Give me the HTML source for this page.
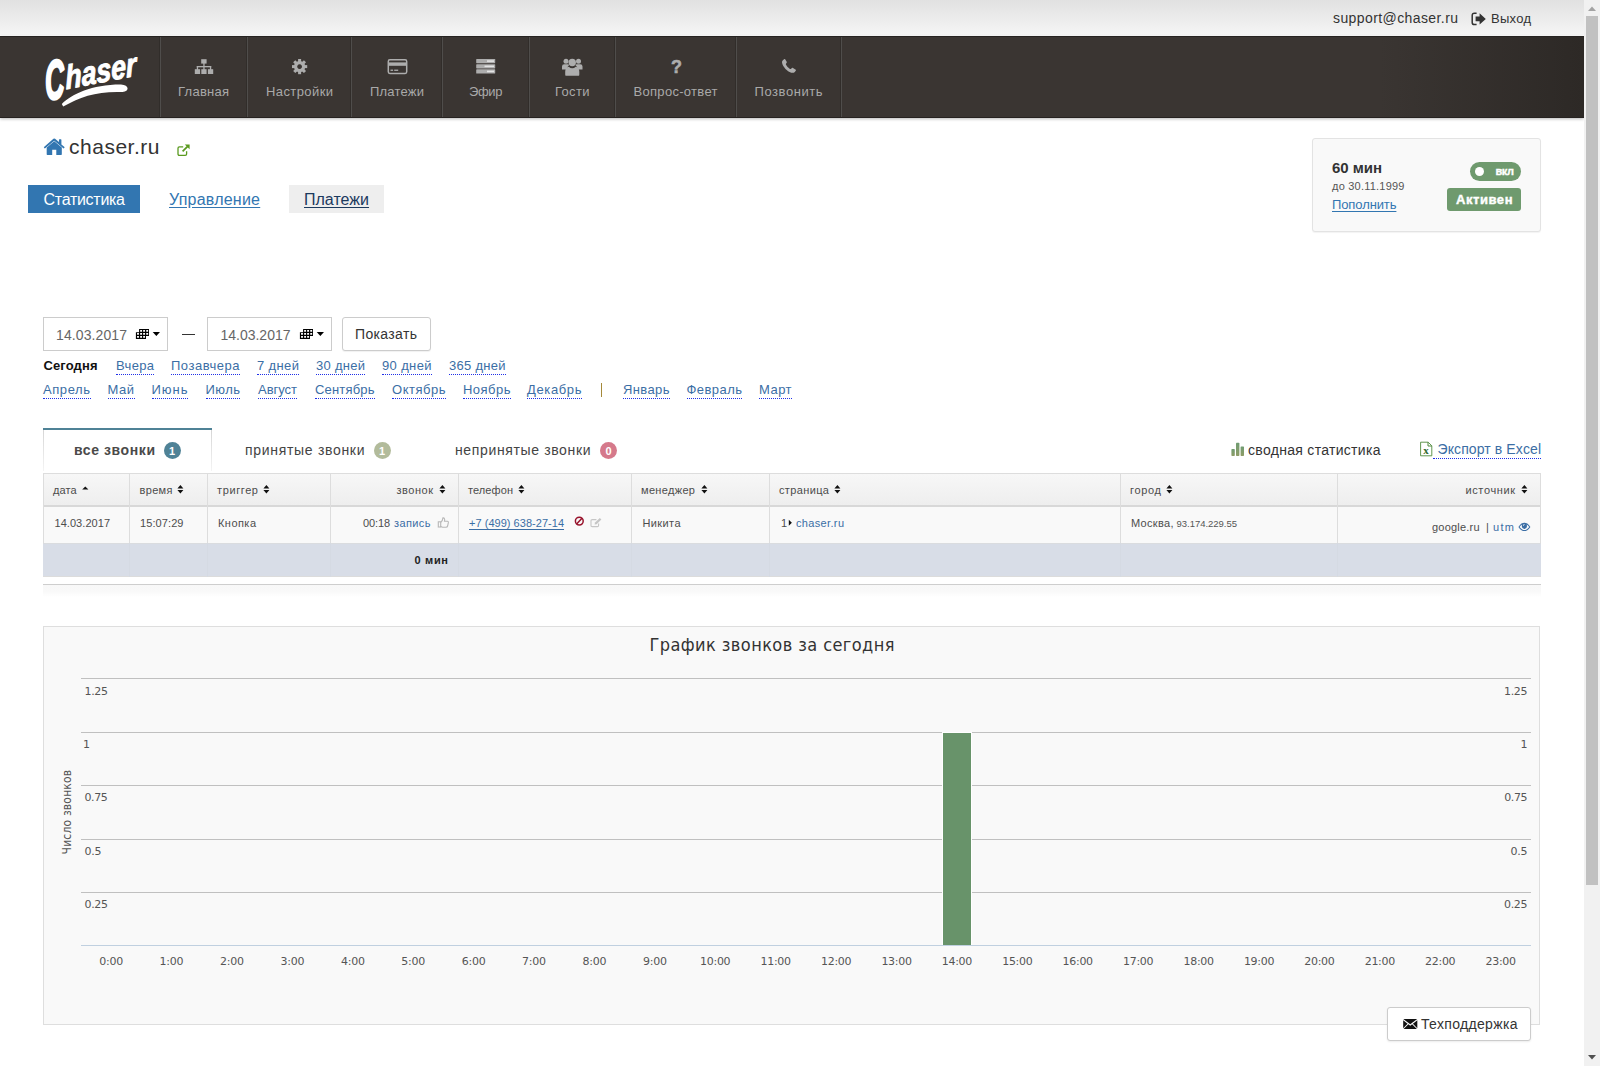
<!DOCTYPE html>
<html lang="ru"><head><meta charset="utf-8"><title>Chaser</title>
<style>
html,body{margin:0;padding:0;}
body{width:1600px;height:1066px;position:relative;overflow:hidden;background:#fff;font-family:"Liberation Sans",sans-serif;}
.t{position:absolute;white-space:nowrap;margin:0;padding:0;}
.b{position:absolute;box-sizing:border-box;}
svg{position:absolute;overflow:visible;}
.dot{border-bottom:1px dotted #2a4fd8;}
</style></head><body>

<!-- top bar -->
<div class="b" style="left:0;top:0;width:1584px;height:35px;background:linear-gradient(#e1e1e1,#f5f5f5);"></div>
<!-- nav -->
<div class="b" style="left:0;top:35px;width:1584px;height:1px;background:#fff;"></div>
<div class="b" style="left:0;top:36px;width:1584px;height:82px;background:linear-gradient(90deg,#3a3532 0,#3a3532 1380px,#2d2926 1584px);box-shadow:0 1px 3px rgba(0,0,0,.28);border-top:1px solid #262321;border-bottom:1px solid #262220;"></div>
<div class="b" style="left:159px;top:37px;width:2px;height:80px;background:linear-gradient(90deg,#312d2a 50%,#4f4d4b 50%);"></div>
<div class="b" style="left:246px;top:37px;width:2px;height:80px;background:linear-gradient(90deg,#312d2a 50%,#4f4d4b 50%);"></div>
<div class="b" style="left:350px;top:37px;width:2px;height:80px;background:linear-gradient(90deg,#312d2a 50%,#4f4d4b 50%);"></div>
<div class="b" style="left:441px;top:37px;width:2px;height:80px;background:linear-gradient(90deg,#312d2a 50%,#4f4d4b 50%);"></div>
<div class="b" style="left:528px;top:37px;width:2px;height:80px;background:linear-gradient(90deg,#312d2a 50%,#4f4d4b 50%);"></div>
<div class="b" style="left:614px;top:37px;width:2px;height:80px;background:linear-gradient(90deg,#312d2a 50%,#4f4d4b 50%);"></div>
<div class="b" style="left:735px;top:37px;width:2px;height:80px;background:linear-gradient(90deg,#312d2a 50%,#4f4d4b 50%);"></div>
<div class="b" style="left:840px;top:37px;width:2px;height:80px;background:linear-gradient(90deg,#312d2a 50%,#4f4d4b 50%);"></div>

<!-- scrollbar -->
<div class="b" style="left:1584px;top:0;width:16px;height:1066px;background:#f1f1f1;"></div>
<div class="b" style="left:1586px;top:16px;width:12px;height:869px;background:#c1c1c1;"></div>
<svg style="left:1584px;top:0" width="16" height="16"><path d="M4 11 L8 6.5 L12 11Z" fill="#a3a3a3"/></svg>
<svg style="left:1584px;top:1050px" width="16" height="16"><path d="M4 5 L8 9.5 L12 5Z" fill="#505050"/></svg>

<!-- site tabs -->
<div class="b" style="left:28px;top:185px;width:112px;height:28px;background:#3276b1;"></div>
<div class="b" style="left:289px;top:185px;width:95px;height:28px;background:#eeeeee;"></div>

<!-- right panel -->
<div class="b" style="left:1312px;top:138px;width:229px;height:94px;background:#f9f9f9;border:1px solid #e3e3e3;border-radius:3px;box-shadow:0 1px 1px rgba(0,0,0,.05);"></div>
<div class="b" style="left:1470px;top:162px;width:51px;height:19px;background:#6f9a6e;border-radius:10px;"></div>
<div class="b" style="left:1475px;top:167px;width:9px;height:9px;background:#fff;border-radius:50%;"></div>
<div class="b" style="left:1447px;top:188px;width:74px;height:23px;background:#6f9a6e;border-radius:3px;"></div>

<!-- date inputs -->
<div class="b" style="left:43px;top:317px;width:125px;height:34px;background:#fff;border:1px solid #ccc;"></div>
<div class="b" style="left:207px;top:317px;width:125px;height:34px;background:#fff;border:1px solid #ccc;"></div>
<div class="b" style="left:342px;top:317px;width:89px;height:34px;background:#fff;border:1px solid #ccc;border-radius:3px;box-shadow:0 1px 1px rgba(0,0,0,.06);"></div>
<div class="b" style="left:182px;top:334px;width:13px;height:1px;background:#333;"></div>
<div class="b" style="left:601px;top:383px;width:1px;height:14px;background:#a5893a;"></div>

<!-- call tabs -->
<div class="b" style="left:43px;top:428px;width:169px;height:2px;background:#4f8296;"></div>
<div class="b" style="left:43px;top:430px;width:1px;height:41px;background:linear-gradient(#d6d6d6,#f4f4f4);"></div>
<div class="b" style="left:211px;top:430px;width:1px;height:41px;background:linear-gradient(#d6d6d6,#f4f4f4);"></div>
<div class="b" style="left:164px;top:442px;width:17px;height:17px;border-radius:50%;background:#4f8296;"></div>
<div class="b" style="left:374px;top:442px;width:17px;height:17px;border-radius:50%;background:#b2bb9b;"></div>
<div class="b" style="left:600px;top:442px;width:17px;height:17px;border-radius:50%;background:#d5798b;"></div>

<!-- table -->
<div class="b" style="left:43px;top:473px;width:1498px;height:34px;background:linear-gradient(#f7f7f7,#eeeeee);border-top:1px solid #ddd;border-bottom:2px solid #d8d8d8;"></div>
<div class="b" style="left:43px;top:507px;width:1498px;height:36px;background:#f9f9f9;"></div>
<div class="b" style="left:43px;top:543px;width:1498px;height:34px;background:#d8dde7;border-top:1px solid #dadcdf;border-bottom:1px solid #dcdcdc;"></div>
<div class="b" style="left:43px;top:473px;width:1px;height:70px;background:#ddd;"></div>
<div class="b" style="left:129px;top:473px;width:1px;height:70px;background:#ddd;"></div>
<div class="b" style="left:207px;top:473px;width:1px;height:70px;background:#ddd;"></div>
<div class="b" style="left:330px;top:473px;width:1px;height:70px;background:#ddd;"></div>
<div class="b" style="left:458px;top:473px;width:1px;height:70px;background:#ddd;"></div>
<div class="b" style="left:631px;top:473px;width:1px;height:70px;background:#ddd;"></div>
<div class="b" style="left:769px;top:473px;width:1px;height:70px;background:#ddd;"></div>
<div class="b" style="left:1120px;top:473px;width:1px;height:70px;background:#ddd;"></div>
<div class="b" style="left:1337px;top:473px;width:1px;height:70px;background:#ddd;"></div>
<div class="b" style="left:1540px;top:473px;width:1px;height:70px;background:#ddd;"></div>
<div class="b" style="left:129px;top:543px;width:1px;height:34px;background:#d5dae3;"></div>
<div class="b" style="left:207px;top:543px;width:1px;height:34px;background:#d5dae3;"></div>
<div class="b" style="left:330px;top:543px;width:1px;height:34px;background:#d5dae3;"></div>
<div class="b" style="left:458px;top:543px;width:1px;height:34px;background:#d5dae3;"></div>
<div class="b" style="left:631px;top:543px;width:1px;height:34px;background:#d5dae3;"></div>
<div class="b" style="left:769px;top:543px;width:1px;height:34px;background:#d5dae3;"></div>
<div class="b" style="left:1120px;top:543px;width:1px;height:34px;background:#d5dae3;"></div>
<div class="b" style="left:1337px;top:543px;width:1px;height:34px;background:#d5dae3;"></div>
<div class="b" style="left:43px;top:584px;width:1498px;height:13px;border-top:1px solid #cecece;background:linear-gradient(#f8f8f8 0,#f9f9f9 55%,#fff 100%);"></div>

<div class="b" style="left:1433px;top:458px;width:108px;height:0;border-top:1px dotted #2030e8;"></div>
<!-- chart -->
<div class="b" style="left:43px;top:626px;width:1497px;height:399px;background:#f9f9f9;border:1px solid #dedede;"></div>
<div class="b" style="left:81px;top:678px;width:1450px;height:1px;background:#c0c0c0;"></div>
<div class="b" style="left:81px;top:732px;width:1450px;height:1px;background:#c0c0c0;"></div>
<div class="b" style="left:81px;top:785px;width:1450px;height:1px;background:#c0c0c0;"></div>
<div class="b" style="left:81px;top:839px;width:1450px;height:1px;background:#c0c0c0;"></div>
<div class="b" style="left:81px;top:892px;width:1450px;height:1px;background:#c0c0c0;"></div>
<div class="b" style="left:81px;top:945px;width:1450px;height:1px;background:#c0d0e0;"></div>
<div class="b" style="left:942px;top:732px;width:30px;height:213px;background:#68936a;border:1px solid #fff;border-bottom:0;"></div>

<!-- support button -->
<div class="b" style="left:1387px;top:1007px;width:144px;height:34px;background:#fff;border:1px solid #ccc;border-radius:3px;box-shadow:0 1px 2px rgba(0,0,0,.08);"></div>
<div class="b" style="white-space:nowrap;left:67px;top:812px;font:400 12px/14px 'DejaVu Sans Condensed','DejaVu Sans',sans-serif;color:#555;letter-spacing:0.17px;transform:translate(-50%,-50%) rotate(-90deg);">Число звонков</div>

<!-- logo -->
<svg style="left:40px;top:50px" width="110" height="62" viewBox="40 50 110 62">
<g transform="translate(46,100.5) rotate(-11) skewX(-8)">
<text font-family="'Liberation Sans', sans-serif" font-weight="700" font-style="italic" fill="#fff" stroke="#fff" stroke-linejoin="round"><tspan x="0" y="0" font-size="54" stroke-width="2.6" textLength="19.5" lengthAdjust="spacingAndGlyphs">C</tspan><tspan x="20.8" y="-7.3" font-size="33" stroke-width="1" textLength="72" lengthAdjust="spacingAndGlyphs">haser</tspan></text>
</g>
<path d="M61.8 104 C72 94 92 84.5 121 84.6 C129.5 84.8 129.6 92 122.5 92 C98 91 80 96.5 63.2 106.6 Z" fill="#fff"/>
</svg>

<!-- nav icons -->
<svg style="left:194px;top:58px" width="20" height="17" viewBox="194 58 20 17" fill="#adadad">
<rect x="201.2" y="59.2" width="5.4" height="4.4"/><rect x="194.8" y="69.2" width="5.3" height="4.8"/><rect x="201.3" y="69.2" width="5.3" height="4.8"/><rect x="207.9" y="69.2" width="5.3" height="4.8"/>
<rect x="203.3" y="63" width="1.3" height="7"/><rect x="196.8" y="66" width="14.4" height="1.3"/><rect x="196.8" y="66" width="1.3" height="4"/><rect x="209.9" y="66" width="1.3" height="4"/>
</svg>
<svg style="left:291px;top:58px" width="18" height="18" viewBox="-9 -9 18 18">
<g transform="translate(-0.4,-0.4)" fill="#adadad">
<path fill-rule="evenodd" d="M0 -5.6 A5.6 5.6 0 1 0 0.001 -5.6 Z M0 -2.4 A2.4 2.4 0 1 1 -0.001 -2.4 Z"/>
<g id="gt"><rect x="-1.5" y="-7.6" width="3" height="3"/></g>
<rect x="-1.5" y="-7.6" width="3" height="3" transform="rotate(45)"/><rect x="-1.5" y="-7.6" width="3" height="3" transform="rotate(90)"/><rect x="-1.5" y="-7.6" width="3" height="3" transform="rotate(135)"/><rect x="-1.5" y="-7.6" width="3" height="3" transform="rotate(180)"/><rect x="-1.5" y="-7.6" width="3" height="3" transform="rotate(225)"/><rect x="-1.5" y="-7.6" width="3" height="3" transform="rotate(270)"/><rect x="-1.5" y="-7.6" width="3" height="3" transform="rotate(315)"/>
</g></svg>
<svg style="left:387px;top:58px" width="21" height="17" viewBox="387 58 21 17">
<rect x="388.3" y="59.8" width="18.4" height="13.6" rx="1.6" fill="none" stroke="#adadad" stroke-width="1.5"/>
<rect x="388.3" y="62.4" width="18.4" height="3.4" fill="#adadad"/>
<rect x="390.5" y="69.6" width="2.6" height="1.3" fill="#adadad"/><rect x="394.2" y="69.6" width="4" height="1.3" fill="#adadad"/>
</svg>
<svg style="left:476px;top:58px" width="20" height="16" viewBox="476 58 20 16" fill="#adadad">
<rect x="476.2" y="59" width="19" height="4.2" rx=".6"/><rect x="476.2" y="64.2" width="19" height="4.2" rx=".6"/><rect x="476.2" y="69.3" width="19" height="4.2" rx=".6"/>
<rect x="487" y="60.3" width="7" height="1.6" fill="#e4e4e4"/><rect x="484.5" y="65.5" width="9.5" height="1.6" fill="#e4e4e4"/><rect x="487" y="70.6" width="7" height="1.6" fill="#e4e4e4"/>
</svg>
<svg style="left:561px;top:57px" width="22" height="20" viewBox="561 57 22 20" fill="#adadad">
<circle cx="566" cy="61.3" r="2.5"/><circle cx="578.5" cy="61.3" r="2.5"/>
<path d="M562 69.5 v-3 q0 -2.3 2.3 -2.3 h3.4 q1 0 1.6 .6 q-2.2 2 -2.4 4.7 Z"/>
<path d="M582.5 69.5 v-3 q0 -2.3 -2.3 -2.3 h-3.4 q-1 0 -1.6 .6 q2.2 2 2.4 4.7 Z"/>
<circle cx="572.25" cy="62.5" r="3.7"/>
<path d="M565.8 75.8 q-.6 0 -.6 -1.4 v-2.6 q0 -4.6 3.6 -5 q1.6 1.5 3.45 1.5 q1.85 0 3.45 -1.5 q3.6 .4 3.6 5 v2.6 q0 1.4 -.6 1.4 Z"/>
</svg>
<svg style="left:781px;top:58px" width="16" height="16" viewBox="0 0 16 16">
<path fill="#adadad" d="M3.2 1.2 C2.2 1.6 .9 2.9 1 4.2 C1.3 7.6 4.6 11.8 8.6 14 C10.6 15.1 12.6 15.2 13.8 14 C14.6 13.2 15.3 12.4 14.8 11.8 L12 10 C11.4 9.6 10.8 9.8 10.4 10.4 C9.9 11.1 9.3 11.2 8.6 10.7 C7.2 9.8 5.8 8.2 5 6.8 C4.7 6.2 4.8 5.8 5.3 5.3 C5.9 4.8 6 4.3 5.7 3.8 L4.3 1.5 C4 1 3.6 1 3.2 1.2 Z"/>
</svg>

<!-- title icons -->
<svg style="left:42.5px;top:137.7px" width="22.5" height="18.4" viewBox="0 0 22 18" fill="#3276b1">
<path d="M11 3.2 L3.6 9.3 V16 q0 .6 .6 .6 H9 V11.6 H13 V16.6 H17.8 q.6 0 .6 -.6 V9.3 Z"/>
<path d="M11 .5 q.4 0 .8 .3 L15.6 4 V1.6 q0 -.4 .4 -.4 h1.6 q.4 0 .4 .4 V6.3 L21 8.8 q.3 .3 .05 .6 l-.6 .7 q-.3 .3 -.6 .05 L11 2.6 L2.15 10.15 q-.3 .25 -.6 -.05 l-.6 -.7 q-.25 -.3 .05 -.6 L10.2 .8 q.4 -.3 .8 -.3 Z"/>
</svg>
<svg style="left:176px;top:142.5px" width="15" height="14" viewBox="0 0 15 14" fill="none" stroke="#5a9a1f">
<path d="M10.6 8.2 V11 q0 1.4 -1.4 1.4 H3.4 q-1.4 0 -1.4 -1.4 V5.2 q0 -1.4 1.4 -1.4 H7.2" stroke-width="1.3"/>
<path d="M6.6 8.4 L12.4 2.6" stroke-width="1.7"/>
<path d="M8.8 1.4 H13.6 V6.2 Z" fill="#5a9a1f" stroke="none"/>
</svg>
<!-- sign out -->
<svg style="left:1471px;top:12px" width="16" height="14" viewBox="0 0 16 14">
<path d="M5.6 1.2 H3.4 q-2.2 0 -2.2 2.2 v7 q0 2.2 2.2 2.2 H5.6" fill="none" stroke="#333" stroke-width="1.5"/>
<path d="M4.6 4.6 H8.6 V1.2 L14.8 6.9 L8.6 12.6 V9.2 H4.6 Z" fill="#333"/>
</svg>

<!-- calendar icons -->
<svg style="left:135px;top:328px" width="27" height="12" viewBox="0 0 27 12" fill="#000"><path fill-rule="evenodd" d="M4.1 1H14V8H11V11H.9V4.2H4.1Z M5.15 1.95h1.9v1.8h-1.9Z M8.15 1.95h1.9v1.8h-1.9Z M11.25 1.95h1.9v1.8h-1.9Z M2.05 5.05h1.9v1.8h-1.9Z M5.15 5.05h1.9v1.8h-1.9Z M8.15 5.05h1.9v1.8h-1.9Z M11.25 5.05h1.9v1.8h-1.9Z M2.05 8.05h1.9v1.8h-1.9Z M5.15 8.05h1.9v1.8h-1.9Z M8.15 8.05h1.9v1.8h-1.9Z"/><path d="M17.7 3.9H25L21.35 8Z"/></svg>
<svg style="left:299px;top:328px" width="27" height="12" viewBox="0 0 27 12" fill="#000"><path fill-rule="evenodd" d="M4.1 1H14V8H11V11H.9V4.2H4.1Z M5.15 1.95h1.9v1.8h-1.9Z M8.15 1.95h1.9v1.8h-1.9Z M11.25 1.95h1.9v1.8h-1.9Z M2.05 5.05h1.9v1.8h-1.9Z M5.15 5.05h1.9v1.8h-1.9Z M8.15 5.05h1.9v1.8h-1.9Z M11.25 5.05h1.9v1.8h-1.9Z M2.05 8.05h1.9v1.8h-1.9Z M5.15 8.05h1.9v1.8h-1.9Z M8.15 8.05h1.9v1.8h-1.9Z"/><path d="M17.7 3.9H25L21.35 8Z"/></svg>

<!-- row icons -->
<svg style="left:437px;top:516px" width="13" height="13" viewBox="0 0 13 13" fill="none" stroke="#b8b8b8" stroke-width="1.1">
<rect x="1.3" y="5.8" width="2.4" height="5.2"/>
<path d="M3.7 6.4 C5.4 5.2 5.8 3.6 5.9 1.9 C7.4 1.6 8 3 7.5 5.2 H10.4 q1.1 .2 1 1.2 L10.6 10 q-.3 1.2 -1.5 1.2 H5.6 L3.7 10.4"/>
</svg>
<svg style="left:574px;top:516px" width="11" height="11" viewBox="0 0 11 11" fill="none" stroke="#98132c" stroke-width="1.5">
<circle cx="5.3" cy="5.1" r="3.9"/><path d="M2.6 7.9 L8 2.3"/>
</svg>
<svg style="left:590px;top:517px" width="13" height="11" viewBox="0 0 13 11" fill="none" stroke="#c6c6c6" stroke-width="1.1">
<path d="M8.6 6.4 V8.4 q0 1.2 -1.2 1.2 H2.2 q-1.2 0 -1.2 -1.2 V3.8 q0 -1.2 1.2 -1.2 H6.4"/>
<path d="M4.6 7.4 L5 5.6 L9.8 .9 L11.4 2.5 L6.6 7.2 Z" fill="#c6c6c6" stroke="none"/>
</svg>
<svg style="left:788px;top:519px" width="5" height="8" viewBox="0 0 5 8"><path d="M.8 .8 L3.9 3.8 L.8 6.8Z" fill="#111"/></svg>
<svg style="left:1518px;top:522px" width="13" height="10" viewBox="0 0 13 10">
<path d="M.4 4.9 C2.4 1.6 4.6 .7 6.4 .7 C8.2 .7 10.4 1.6 12.4 4.9 C10.4 8.2 8.2 9.1 6.4 9.1 C4.6 9.1 2.4 8.2 .4 4.9 Z M1.6 4.9 C3 6.9 4.8 8 6.4 8 C8 8 9.8 6.9 11.2 4.9 C10.4 3.8 9.6 3 8.6 2.5 C9.6 4.5 8.6 6.9 6.4 6.9 C4.2 6.9 3.2 4.5 4.2 2.5 C3.2 3 2.4 3.8 1.6 4.9 Z M6.4 2.2 A1.4 1.4 0 0 0 5 3.6 A.35 .35 0 0 0 5.7 3.6 A.7 .7 0 0 1 6.4 2.9 A.35 .35 0 0 0 6.4 2.2 Z" fill="#3b6ea5" fill-rule="evenodd"/>
</svg>
<!-- summary icons -->
<svg style="left:1231px;top:442px" width="14" height="15" viewBox="0 0 14 15">
<defs><linearGradient id="gb" x1="0" y1="0" x2="0" y2="1"><stop offset="0" stop-color="#6f9c72"/><stop offset="1" stop-color="#8f9c66"/></linearGradient></defs>
<rect x=".4" y="7" width="3.4" height="7" rx=".7" fill="url(#gb)"/><rect x="5" y=".8" width="3.4" height="13.2" rx=".7" fill="url(#gb)"/><rect x="9.6" y="4.4" width="3.4" height="9.6" rx=".7" fill="url(#gb)"/>
</svg>
<svg style="left:1419px;top:441px" width="15" height="16" viewBox="0 0 15 16">
<path d="M1.6 1.2 H9.2 L12.8 4.8 V14.8 H1.6 Z" fill="#fff" stroke="#4f8a3c" stroke-width=".9"/>
<path d="M9 1.2 V5 H12.8" fill="none" stroke="#4f8a3c" stroke-width="1"/>
<text x="7.1" y="13.2" text-anchor="middle" font-family="'Liberation Serif',serif" font-size="11" font-weight="700" fill="#2f6b2f">x</text>
</svg>
<!-- envelope -->
<svg style="left:1403px;top:1018px" width="15" height="12" viewBox="0 0 15 12" fill="#111">
<path d="M.3 .9 H14.2 L7.25 6.3 Z"/><path d="M.2 2.2 L4.6 5.7 L.2 10.2 Z"/><path d="M14.3 2.2 L9.9 5.7 L14.3 10.2 Z"/><path d="M.6 11 L5.4 6.3 L7.25 7.8 L9.1 6.3 L13.9 11 Z"/>
</svg>

<!-- sort icons -->
<svg style="left:82px;top:485px" width="8" height="11" viewBox="0 0 8 11"><path d="M.2 4.6 L3.3 1.4 L6.4 4.6Z" fill="#111"/></svg>
<svg style="left:177px;top:484px" width="8" height="11" viewBox="0 0 8 11"><path d="M.4 4.4 L3.4 .9 L6.4 4.4Z M.4 5.9 L3.4 9.4 L6.4 5.9Z" fill="#111"/></svg>
<svg style="left:263px;top:484px" width="8" height="11" viewBox="0 0 8 11"><path d="M.4 4.4 L3.4 .9 L6.4 4.4Z M.4 5.9 L3.4 9.4 L6.4 5.9Z" fill="#111"/></svg>
<svg style="left:438.5px;top:484px" width="8" height="11" viewBox="0 0 8 11"><path d="M.4 4.4 L3.4 .9 L6.4 4.4Z M.4 5.9 L3.4 9.4 L6.4 5.9Z" fill="#111"/></svg>
<svg style="left:518.3px;top:484px" width="8" height="11" viewBox="0 0 8 11"><path d="M.4 4.4 L3.4 .9 L6.4 4.4Z M.4 5.9 L3.4 9.4 L6.4 5.9Z" fill="#111"/></svg>
<svg style="left:700.7px;top:484px" width="8" height="11" viewBox="0 0 8 11"><path d="M.4 4.4 L3.4 .9 L6.4 4.4Z M.4 5.9 L3.4 9.4 L6.4 5.9Z" fill="#111"/></svg>
<svg style="left:834px;top:484px" width="8" height="11" viewBox="0 0 8 11"><path d="M.4 4.4 L3.4 .9 L6.4 4.4Z M.4 5.9 L3.4 9.4 L6.4 5.9Z" fill="#111"/></svg>
<svg style="left:1165.5px;top:484px" width="8" height="11" viewBox="0 0 8 11"><path d="M.4 4.4 L3.4 .9 L6.4 4.4Z M.4 5.9 L3.4 9.4 L6.4 5.9Z" fill="#111"/></svg>
<svg style="left:1520.7px;top:484px" width="8" height="11" viewBox="0 0 8 11"><path d="M.4 4.4 L3.4 .9 L6.4 4.4Z M.4 5.9 L3.4 9.4 L6.4 5.9Z" fill="#111"/></svg>

<span class="t" id="t0" style="left:1333px;top:9px;font:400 14px/18px 'Liberation Sans', sans-serif;color:#333;letter-spacing:0.406px;">support@chaser.ru</span>
<span class="t" id="t1" style="left:1491px;top:10px;font:400 13px/17px 'Liberation Sans', sans-serif;color:#333;letter-spacing:0.273px;">Выход</span>
<span class="t" id="t2" style="left:178px;top:83px;font:400 13px/17px 'Liberation Sans', sans-serif;color:#a9a9a9;letter-spacing:0.253px;">Главная</span>
<span class="t" id="t3" style="left:266px;top:83px;font:400 13px/17px 'Liberation Sans', sans-serif;color:#a9a9a9;letter-spacing:0.406px;">Настройки</span>
<span class="t" id="t4" style="left:370px;top:83px;font:400 13px/17px 'Liberation Sans', sans-serif;color:#a9a9a9;letter-spacing:0.211px;">Платежи</span>
<span class="t" id="t5" style="left:469px;top:83px;font:400 13px/17px 'Liberation Sans', sans-serif;color:#a9a9a9;letter-spacing:-0.344px;">Эфир</span>
<span class="t" id="t6" style="left:555px;top:83px;font:400 13px/17px 'Liberation Sans', sans-serif;color:#a9a9a9;letter-spacing:0.344px;">Гости</span>
<span class="t" id="t7" style="left:633.5px;top:83px;font:400 13px/17px 'Liberation Sans', sans-serif;color:#a9a9a9;letter-spacing:0.305px;">Вопрос-ответ</span>
<span class="t" id="t8" style="left:754.5px;top:83px;font:400 13px/17px 'Liberation Sans', sans-serif;color:#a9a9a9;letter-spacing:0.557px;">Позвонить</span>
<span class="t" id="t9" style="left:671px;top:56px;font:700 18px/23px 'Liberation Sans', sans-serif;color:#adadad;letter-spacing:0.000px;-webkit-text-stroke:.5px #adadad;">?</span>
<span class="t" id="t10" style="left:69px;top:133px;font:400 21px/27px 'Liberation Sans', sans-serif;color:#333;letter-spacing:0.514px;">chaser.ru</span>
<span class="t" id="t11" style="left:43.5px;top:189px;font:400 16px/21px 'Liberation Sans', sans-serif;color:#fff;letter-spacing:-0.281px;">Статистика</span>
<span class="t" id="t12" style="left:169px;top:189px;font:400 16px/21px 'Liberation Sans', sans-serif;color:#3276b1;letter-spacing:0.227px;text-decoration:underline;text-underline-offset:2px;">Управление</span>
<span class="t" id="t13" style="left:304px;top:189px;font:400 16px/21px 'Liberation Sans', sans-serif;color:#1c3a5e;letter-spacing:0.018px;text-decoration:underline;text-underline-offset:2px;">Платежи</span>
<span class="t" id="t14" style="left:1332px;top:158px;font:700 15px/20px 'Liberation Sans', sans-serif;color:#333;letter-spacing:-0.047px;">60 мин</span>
<span class="t" id="t15" style="left:1332px;top:179px;font:400 11px/14px 'Liberation Sans', sans-serif;color:#555;letter-spacing:0.221px;">до 30.11.1999</span>
<span class="t" id="t16" style="left:1332px;top:196px;font:400 13px/17px 'Liberation Sans', sans-serif;color:#3276b1;letter-spacing:-0.102px;text-decoration:underline;text-underline-offset:1.5px;">Пополнить</span>
<span class="t" id="t17" style="left:1495.5px;top:164px;font:700 11px/14px 'Liberation Sans', sans-serif;color:#fff;letter-spacing:-0.445px;-webkit-text-stroke:.35px #fff;">вкл</span>
<span class="t" id="t18" style="left:1456px;top:191px;font:700 13px/17px 'Liberation Sans', sans-serif;color:#fff;letter-spacing:0.557px;-webkit-text-stroke:.4px #fff;">Активен</span>
<span class="t" id="t19" style="left:56px;top:326px;font:400 14px/18px 'Liberation Sans', sans-serif;color:#666;letter-spacing:0.102px;">14.03.2017</span>
<span class="t" id="t20" style="left:220.5px;top:326px;font:400 14px/18px 'Liberation Sans', sans-serif;color:#666;letter-spacing:-0.009px;">14.03.2017</span>
<span class="t" id="t21" style="left:355px;top:325px;font:400 14px/18px 'Liberation Sans', sans-serif;color:#333;letter-spacing:0.355px;">Показать</span>
<span class="t" id="t22" style="left:43.5px;top:357px;font:700 13px/17px 'Liberation Sans', sans-serif;color:#111;letter-spacing:0.112px;">Сегодня</span>
<span class="t" id="t23" style="left:116px;top:357px;font:400 13px/17px 'Liberation Sans', sans-serif;color:#3b6ea5;letter-spacing:0.324px;border-bottom:1px dotted #2030e8;padding-bottom:0px;">Вчера</span>
<span class="t" id="t24" style="left:171px;top:357px;font:400 13px/17px 'Liberation Sans', sans-serif;color:#3b6ea5;letter-spacing:0.512px;border-bottom:1px dotted #2030e8;padding-bottom:0px;">Позавчера</span>
<span class="t" id="t25" style="left:257px;top:357px;font:400 13px/17px 'Liberation Sans', sans-serif;color:#3b6ea5;letter-spacing:0.378px;border-bottom:1px dotted #2030e8;padding-bottom:0px;">7 дней</span>
<span class="t" id="t26" style="left:316px;top:357px;font:400 13px/17px 'Liberation Sans', sans-serif;color:#3b6ea5;letter-spacing:0.279px;border-bottom:1px dotted #2030e8;padding-bottom:0px;">30 дней</span>
<span class="t" id="t27" style="left:382px;top:357px;font:400 13px/17px 'Liberation Sans', sans-serif;color:#3b6ea5;letter-spacing:0.362px;border-bottom:1px dotted #2030e8;padding-bottom:0px;">90 дней</span>
<span class="t" id="t28" style="left:449px;top:357px;font:400 13px/17px 'Liberation Sans', sans-serif;color:#3b6ea5;letter-spacing:0.277px;border-bottom:1px dotted #2030e8;padding-bottom:0px;">365 дней</span>
<span class="t" id="t29" style="left:43px;top:381px;font:400 13px/17px 'Liberation Sans', sans-serif;color:#3b6ea5;letter-spacing:0.578px;border-bottom:1px dotted #2030e8;">Апрель</span>
<span class="t" id="t30" style="left:107.5px;top:381px;font:400 13px/17px 'Liberation Sans', sans-serif;color:#3b6ea5;letter-spacing:0.516px;border-bottom:1px dotted #2030e8;">Май</span>
<span class="t" id="t31" style="left:151.5px;top:381px;font:400 13px/17px 'Liberation Sans', sans-serif;color:#3b6ea5;letter-spacing:0.984px;border-bottom:1px dotted #2030e8;">Июнь</span>
<span class="t" id="t32" style="left:205.5px;top:381px;font:400 13px/17px 'Liberation Sans', sans-serif;color:#3b6ea5;letter-spacing:0.443px;border-bottom:1px dotted #2030e8;">Июль</span>
<span class="t" id="t33" style="left:258px;top:381px;font:400 13px/17px 'Liberation Sans', sans-serif;color:#3b6ea5;letter-spacing:-0.028px;border-bottom:1px dotted #2030e8;">Август</span>
<span class="t" id="t34" style="left:315px;top:381px;font:400 13px/17px 'Liberation Sans', sans-serif;color:#3b6ea5;letter-spacing:0.179px;border-bottom:1px dotted #2030e8;">Сентябрь</span>
<span class="t" id="t35" style="left:392px;top:381px;font:400 13px/17px 'Liberation Sans', sans-serif;color:#3b6ea5;letter-spacing:0.518px;border-bottom:1px dotted #2030e8;">Октябрь</span>
<span class="t" id="t36" style="left:463px;top:381px;font:400 13px/17px 'Liberation Sans', sans-serif;color:#3b6ea5;letter-spacing:0.478px;border-bottom:1px dotted #2030e8;">Ноябрь</span>
<span class="t" id="t37" style="left:527px;top:381px;font:400 13px/17px 'Liberation Sans', sans-serif;color:#3b6ea5;letter-spacing:0.635px;border-bottom:1px dotted #2030e8;">Декабрь</span>
<span class="t" id="t38" style="left:623px;top:381px;font:400 13px/17px 'Liberation Sans', sans-serif;color:#3b6ea5;letter-spacing:0.388px;border-bottom:1px dotted #2030e8;">Январь</span>
<span class="t" id="t39" style="left:686.5px;top:381px;font:400 13px/17px 'Liberation Sans', sans-serif;color:#3b6ea5;letter-spacing:0.443px;border-bottom:1px dotted #2030e8;">Февраль</span>
<span class="t" id="t40" style="left:759px;top:381px;font:400 13px/17px 'Liberation Sans', sans-serif;color:#3b6ea5;letter-spacing:0.464px;border-bottom:1px dotted #2030e8;">Март</span>
<span class="t" id="t41" style="left:74px;top:441px;font:700 14px/18px 'Liberation Sans', sans-serif;color:#4a4a4a;letter-spacing:0.585px;">все звонки</span>
<span class="t" id="t42" style="left:163.5px;top:444px;font:700 11px/14px 'Liberation Sans', sans-serif;color:#fff;letter-spacing:0.000px;width:17px;text-align:center;">1</span>
<span class="t" id="t43" style="left:245px;top:441px;font:400 14px/18px 'Liberation Sans', sans-serif;color:#444;letter-spacing:0.692px;">принятые звонки</span>
<span class="t" id="t44" style="left:373.5px;top:444px;font:700 11px/14px 'Liberation Sans', sans-serif;color:#fff;letter-spacing:0.000px;width:17px;text-align:center;">1</span>
<span class="t" id="t45" style="left:455px;top:441px;font:400 14px/18px 'Liberation Sans', sans-serif;color:#444;letter-spacing:0.635px;">непринятые звонки</span>
<span class="t" id="t46" style="left:600px;top:444px;font:700 11px/14px 'Liberation Sans', sans-serif;color:#fff;letter-spacing:0.000px;width:17px;text-align:center;">0</span>
<span class="t" id="t47" style="left:1248px;top:441px;font:400 14px/18px 'Liberation Sans', sans-serif;color:#333;letter-spacing:0.303px;">сводная статистика</span>
<span class="t" id="t48" style="left:1437.5px;top:440px;font:400 14px/18px 'Liberation Sans', sans-serif;color:#3b6ea5;letter-spacing:0.103px;">Экспорт в Excel</span>
<span class="t" id="t49" style="left:53px;top:483px;font:400 11px/14px 'Liberation Sans', sans-serif;color:#4c4c4c;letter-spacing:0.057px;">дата</span>
<span class="t" id="t50" style="left:139.5px;top:483px;font:400 11px/14px 'Liberation Sans', sans-serif;color:#4c4c4c;letter-spacing:0.348px;">время</span>
<span class="t" id="t51" style="left:217px;top:483px;font:400 11px/14px 'Liberation Sans', sans-serif;color:#4c4c4c;letter-spacing:0.612px;">триггер</span>
<span class="t" id="t52" style="left:396.5px;top:483px;font:400 11px/14px 'Liberation Sans', sans-serif;color:#4c4c4c;letter-spacing:0.522px;">звонок</span>
<span class="t" id="t53" style="left:468px;top:483px;font:400 11px/14px 'Liberation Sans', sans-serif;color:#4c4c4c;letter-spacing:0.091px;">телефон</span>
<span class="t" id="t54" style="left:641px;top:483px;font:400 11px/14px 'Liberation Sans', sans-serif;color:#4c4c4c;letter-spacing:0.335px;">менеджер</span>
<span class="t" id="t55" style="left:779px;top:483px;font:400 11px/14px 'Liberation Sans', sans-serif;color:#4c4c4c;letter-spacing:0.368px;">страница</span>
<span class="t" id="t56" style="left:1130px;top:483px;font:400 11px/14px 'Liberation Sans', sans-serif;color:#4c4c4c;letter-spacing:0.672px;">город</span>
<span class="t" id="t57" style="left:1465.5px;top:483px;font:400 11px/14px 'Liberation Sans', sans-serif;color:#4c4c4c;letter-spacing:0.614px;">источник</span>
<span class="t" id="t58" style="left:54.5px;top:516px;font:400 11px/14px 'Liberation Sans', sans-serif;color:#4d4d4d;letter-spacing:0.049px;">14.03.2017</span>
<span class="t" id="t59" style="left:140px;top:516px;font:400 11px/14px 'Liberation Sans', sans-serif;color:#4d4d4d;letter-spacing:0.096px;">15:07:29</span>
<span class="t" id="t60" style="left:218px;top:516px;font:400 11px/14px 'Liberation Sans', sans-serif;color:#4d4d4d;letter-spacing:0.453px;">Кнопка</span>
<span class="t" id="t61" style="left:363px;top:516px;font:400 11px/14px 'Liberation Sans', sans-serif;color:#4d4d4d;letter-spacing:-0.133px;">00:18</span>
<span class="t" id="t62" style="left:394px;top:516px;font:400 11px/14px 'Liberation Sans', sans-serif;color:#3b6ea5;letter-spacing:0.400px;">запись</span>
<span class="t" id="t63" style="left:469px;top:516px;font:400 11px/14px 'Liberation Sans', sans-serif;color:#3b6ea5;letter-spacing:0.030px;text-decoration:underline;text-underline-offset:2px;">+7 (499) 638-27-14</span>
<span class="t" id="t64" style="left:642.5px;top:516px;font:400 11px/14px 'Liberation Sans', sans-serif;color:#4d4d4d;letter-spacing:0.384px;">Никита</span>
<span class="t" id="t65" style="left:781px;top:516px;font:400 11px/14px 'Liberation Sans', sans-serif;color:#4d4d4d;letter-spacing:0.000px;">1</span>
<span class="t" id="t66" style="left:796px;top:516px;font:400 11px/14px 'Liberation Sans', sans-serif;color:#3b6ea5;letter-spacing:0.344px;">chaser.ru</span>
<span class="t" id="t67" style="left:1131px;top:516px;font:400 11px/14px 'Liberation Sans', sans-serif;color:#4d4d4d;letter-spacing:0.312px;">Москва,</span>
<span class="t" id="t68" style="left:1176.5px;top:518px;font:400 9.5px/12px 'Liberation Sans', sans-serif;color:#555;letter-spacing:-0.022px;">93.174.229.55</span>
<span class="t" id="t69" style="left:1432px;top:520px;font:400 11px/14px 'Liberation Sans', sans-serif;color:#4d4d4d;letter-spacing:0.203px;">google.ru</span>
<span class="t" id="t70" style="left:1486px;top:520px;font:400 11px/14px 'Liberation Sans', sans-serif;color:#4d4d4d;letter-spacing:0.000px;">|</span>
<span class="t" id="t71" style="left:1493px;top:520px;font:400 11px/14px 'Liberation Sans', sans-serif;color:#3b6ea5;letter-spacing:1.328px;">utm</span>
<span class="t" id="t72" style="left:414.5px;top:553px;font:700 11px/14px 'Liberation Sans', sans-serif;color:#222;letter-spacing:0.695px;">0 мин</span>
<span class="t" id="t73" style="left:649.5px;top:633px;font:400 18px/23px 'DejaVu Sans Condensed', 'DejaVu Sans', sans-serif;color:#333;letter-spacing:0.421px;">График звонков за сегодня</span>
<span class="t" id="t74" style="left:84.5px;top:685px;font:400 11px/14px 'DejaVu Sans', 'Liberation Sans', sans-serif;color:#555;letter-spacing:-0.333px;">1.25</span>
<span class="t" id="t75" style="left:1504.0px;top:685px;font:400 11px/14px 'DejaVu Sans', 'Liberation Sans', sans-serif;color:#555;letter-spacing:-0.333px;">1.25</span>
<span class="t" id="t76" style="left:83px;top:738px;font:400 11px/14px 'DejaVu Sans', 'Liberation Sans', sans-serif;color:#555;letter-spacing:0.000px;">1</span>
<span class="t" id="t77" style="left:1520.5px;top:738px;font:400 11px/14px 'DejaVu Sans', 'Liberation Sans', sans-serif;color:#555;letter-spacing:0.000px;">1</span>
<span class="t" id="t78" style="left:84.5px;top:791px;font:400 11px/14px 'DejaVu Sans', 'Liberation Sans', sans-serif;color:#555;letter-spacing:-0.400px;">0.75</span>
<span class="t" id="t79" style="left:1504.2px;top:791px;font:400 11px/14px 'DejaVu Sans', 'Liberation Sans', sans-serif;color:#555;letter-spacing:-0.400px;">0.75</span>
<span class="t" id="t80" style="left:84.5px;top:845px;font:400 11px/14px 'DejaVu Sans', 'Liberation Sans', sans-serif;color:#555;letter-spacing:-0.250px;">0.5</span>
<span class="t" id="t81" style="left:1510.5px;top:845px;font:400 11px/14px 'DejaVu Sans', 'Liberation Sans', sans-serif;color:#555;letter-spacing:-0.250px;">0.5</span>
<span class="t" id="t82" style="left:84.5px;top:898px;font:400 11px/14px 'DejaVu Sans', 'Liberation Sans', sans-serif;color:#555;letter-spacing:-0.333px;">0.25</span>
<span class="t" id="t83" style="left:1504.0px;top:898px;font:400 11px/14px 'DejaVu Sans', 'Liberation Sans', sans-serif;color:#555;letter-spacing:-0.333px;">0.25</span>
<span class="t" id="t84" style="left:99.2px;top:955px;font:400 11px/14px 'DejaVu Sans', 'Liberation Sans', sans-serif;color:#555;letter-spacing:-0.234px;">0:00</span>
<span class="t" id="t85" style="left:159.6px;top:955px;font:400 11px/14px 'DejaVu Sans', 'Liberation Sans', sans-serif;color:#555;letter-spacing:-0.234px;">1:00</span>
<span class="t" id="t86" style="left:220.0px;top:955px;font:400 11px/14px 'DejaVu Sans', 'Liberation Sans', sans-serif;color:#555;letter-spacing:-0.234px;">2:00</span>
<span class="t" id="t87" style="left:280.5px;top:955px;font:400 11px/14px 'DejaVu Sans', 'Liberation Sans', sans-serif;color:#555;letter-spacing:-0.234px;">3:00</span>
<span class="t" id="t88" style="left:340.9px;top:955px;font:400 11px/14px 'DejaVu Sans', 'Liberation Sans', sans-serif;color:#555;letter-spacing:-0.234px;">4:00</span>
<span class="t" id="t89" style="left:401.3px;top:955px;font:400 11px/14px 'DejaVu Sans', 'Liberation Sans', sans-serif;color:#555;letter-spacing:-0.234px;">5:00</span>
<span class="t" id="t90" style="left:461.7px;top:955px;font:400 11px/14px 'DejaVu Sans', 'Liberation Sans', sans-serif;color:#555;letter-spacing:-0.234px;">6:00</span>
<span class="t" id="t91" style="left:522.1px;top:955px;font:400 11px/14px 'DejaVu Sans', 'Liberation Sans', sans-serif;color:#555;letter-spacing:-0.234px;">7:00</span>
<span class="t" id="t92" style="left:582.5px;top:955px;font:400 11px/14px 'DejaVu Sans', 'Liberation Sans', sans-serif;color:#555;letter-spacing:-0.234px;">8:00</span>
<span class="t" id="t93" style="left:643.0px;top:955px;font:400 11px/14px 'DejaVu Sans', 'Liberation Sans', sans-serif;color:#555;letter-spacing:-0.234px;">9:00</span>
<span class="t" id="t94" style="left:700.1px;top:955px;font:400 11px/14px 'DejaVu Sans', 'Liberation Sans', sans-serif;color:#555;letter-spacing:-0.301px;">10:00</span>
<span class="t" id="t95" style="left:760.5px;top:955px;font:400 11px/14px 'DejaVu Sans', 'Liberation Sans', sans-serif;color:#555;letter-spacing:-0.301px;">11:00</span>
<span class="t" id="t96" style="left:821.0px;top:955px;font:400 11px/14px 'DejaVu Sans', 'Liberation Sans', sans-serif;color:#555;letter-spacing:-0.301px;">12:00</span>
<span class="t" id="t97" style="left:881.4px;top:955px;font:400 11px/14px 'DejaVu Sans', 'Liberation Sans', sans-serif;color:#555;letter-spacing:-0.301px;">13:00</span>
<span class="t" id="t98" style="left:941.8px;top:955px;font:400 11px/14px 'DejaVu Sans', 'Liberation Sans', sans-serif;color:#555;letter-spacing:-0.301px;">14:00</span>
<span class="t" id="t99" style="left:1002.2px;top:955px;font:400 11px/14px 'DejaVu Sans', 'Liberation Sans', sans-serif;color:#555;letter-spacing:-0.301px;">15:00</span>
<span class="t" id="t100" style="left:1062.6px;top:955px;font:400 11px/14px 'DejaVu Sans', 'Liberation Sans', sans-serif;color:#555;letter-spacing:-0.301px;">16:00</span>
<span class="t" id="t101" style="left:1123.0px;top:955px;font:400 11px/14px 'DejaVu Sans', 'Liberation Sans', sans-serif;color:#555;letter-spacing:-0.301px;">17:00</span>
<span class="t" id="t102" style="left:1183.5px;top:955px;font:400 11px/14px 'DejaVu Sans', 'Liberation Sans', sans-serif;color:#555;letter-spacing:-0.301px;">18:00</span>
<span class="t" id="t103" style="left:1243.9px;top:955px;font:400 11px/14px 'DejaVu Sans', 'Liberation Sans', sans-serif;color:#555;letter-spacing:-0.301px;">19:00</span>
<span class="t" id="t104" style="left:1304.3px;top:955px;font:400 11px/14px 'DejaVu Sans', 'Liberation Sans', sans-serif;color:#555;letter-spacing:-0.301px;">20:00</span>
<span class="t" id="t105" style="left:1364.7px;top:955px;font:400 11px/14px 'DejaVu Sans', 'Liberation Sans', sans-serif;color:#555;letter-spacing:-0.301px;">21:00</span>
<span class="t" id="t106" style="left:1425.1px;top:955px;font:400 11px/14px 'DejaVu Sans', 'Liberation Sans', sans-serif;color:#555;letter-spacing:-0.301px;">22:00</span>
<span class="t" id="t107" style="left:1485.5px;top:955px;font:400 11px/14px 'DejaVu Sans', 'Liberation Sans', sans-serif;color:#555;letter-spacing:-0.301px;">23:00</span>
<span class="t" id="t108" style="left:1421px;top:1015px;font:400 14px/18px 'Liberation Sans', sans-serif;color:#333;letter-spacing:0.335px;">Техподдержка</span>

</body></html>
